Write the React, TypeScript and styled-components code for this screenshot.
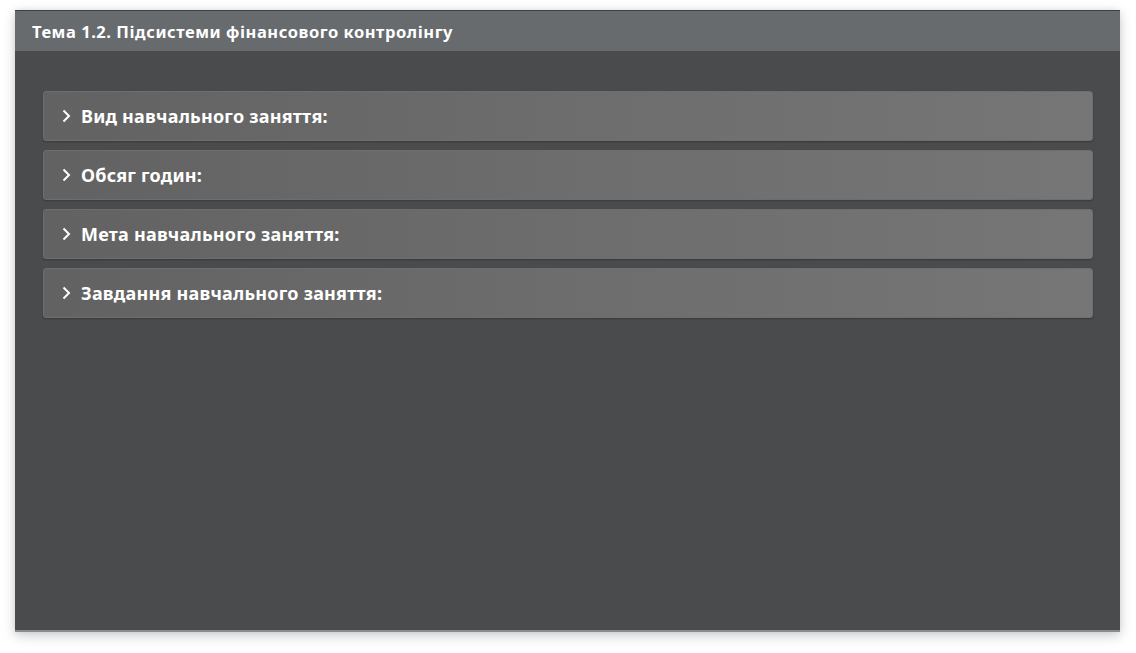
import React from "react";
import styled, { createGlobalStyle } from "styled-components";

const Global = createGlobalStyle`
  html, body { margin: 0; padding: 0; background: #ffffff; }
  body { font-family: "Noto Sans", "Open Sans", sans-serif; }
`;

const Page = styled.div`
  width: 1136px;
  height: 653px;
  padding: 10px 16px 21px 15px;
  box-sizing: border-box;
  display: flex;
`;

const Panel = styled.section`
  flex: 1;
  display: flex;
  flex-direction: column;
  background: #4a4b4d;
  border-top: 1px solid #3e4042;
  border-bottom: 2px solid #8a8b8c;
  box-shadow: 0 4px 12px rgba(0, 0, 0, 0.18), 0 0 6px rgba(0, 0, 0, 0.08);
`;

const Header = styled.header`
  height: 40px;
  background: #686b6e;
  display: flex;
  align-items: center;
  padding: 0 17px;
  color: #ffffff;
  font-weight: 700;
  font-size: 16.5px;
  letter-spacing: 0.55px;
`;

const Body = styled.div`
  display: flex;
  flex-direction: column;
  gap: 9px;
  padding: 40px 27px 0 28px;
`;

const Item = styled.button`
  height: 50px;
  display: flex;
  align-items: center;
  gap: 10px;
  padding: 0 0 0 17px;
  border: 1px solid #6e6e6e;
  border-radius: 3px;
  background: linear-gradient(90deg, #626262 0%, #6d6d6d 50%, #767676 100%);
  box-shadow: 0 1px 2px rgba(0, 0, 0, 0.25);
  color: #ffffff;
  font-family: "Noto Sans", "Open Sans", sans-serif;
  font-weight: 700;
  font-size: 18px;
  letter-spacing: 0.22px;
  text-align: left;
  cursor: pointer;
`;

const Chevron = styled.svg`
  width: 10px;
  height: 14px;
  flex: none;
`;

const items = [
  "Вид навчального заняття:",
  "Обсяг годин:",
  "Мета навчального заняття:",
  "Завдання навчального заняття:",
];

export default function App() {
  return (
    <Page>
      <Global />
      <Panel>
        <Header>Тема 1.2. Підсистеми фінансового контролінгу</Header>
        <Body>
          {items.map((t) => (
            <Item key={t}>
              <Chevron viewBox="0 0 10 14">
                <path d="M2.5 1.5 L8 7 L2.5 12.5" fill="none" stroke="#ffffff" strokeWidth="2" />
              </Chevron>
              {t}
            </Item>
          ))}
        </Body>
      </Panel>
    </Page>
  );
}
